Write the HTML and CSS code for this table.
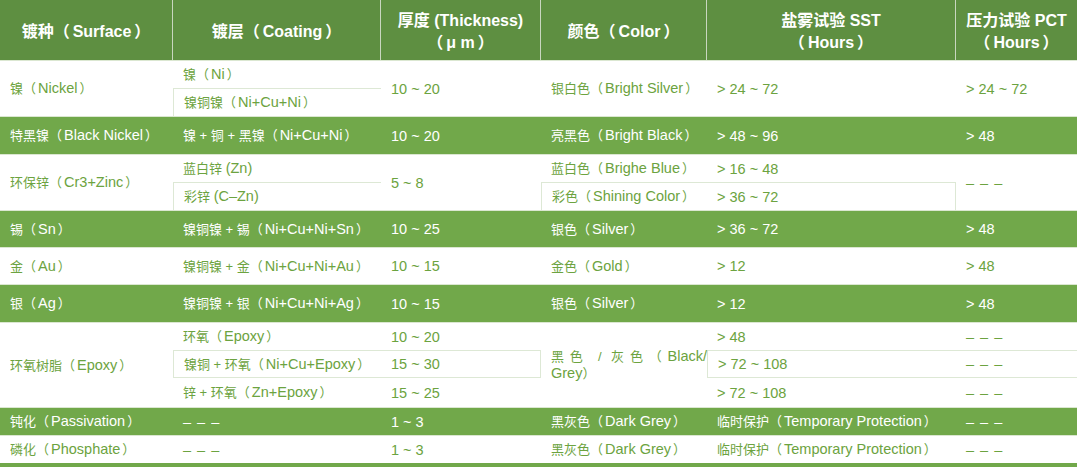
FILE: index.html
```html
<!DOCTYPE html>
<html lang="zh">
<head>
<meta charset="utf-8">
<title>镀层规格</title>
<link rel="stylesheet" href="styles.css">
</head>
<body>
<table class="spec">
  <colgroup>
    <col class="c1"><col class="c2"><col class="c3"><col class="c4"><col class="c5"><col class="c6">
  </colgroup>
  <thead>
    <tr class="head">
      <th>镀种（<span class="in">Surface</span>）</th>
      <th>镀层（<span class="in">Coating</span>）</th>
      <th>厚度 (Thickness)<br>（<span class="in">μ m</span>）</th>
      <th>颜色（<span class="in">Color</span>）</th>
      <th>盐雾试验 SST<br>（<span class="in">Hours</span>）</th>
      <th>压力试验 PCT<br>（<span class="in">Hours</span>）</th>
    </tr>
  </thead>
  <tbody>
    <tr class="sep h28">
      <td rowspan="2">镍（<span class="in">Nickel</span>）</td>
      <td>镍（<span class="in">Ni</span>）</td>
      <td rowspan="2" class="num">10 ~ 20</td>
      <td rowspan="2">银白色（<span class="in">Bright Silver</span>）</td>
      <td rowspan="2" class="num">&gt; 24 ~ 72</td>
      <td rowspan="2" class="num">&gt; 24 ~ 72</td>
    </tr>
    <tr class="h28">
      <td class="bt bl">镍铜镍（<span class="in">Ni+Cu+Ni</span>）</td>
    </tr>
    <tr class="sep green h38">
      <td>特黑镍（<span class="in">Black Nickel</span>）</td>
      <td>镍 + 铜 + 黑镍（<span class="in">Ni+Cu+Ni</span>）</td>
      <td class="num">10 ~ 20</td>
      <td>亮黑色（<span class="in">Bright Black</span>）</td>
      <td class="num">&gt; 48 ~ 96</td>
      <td class="num">&gt; 48</td>
    </tr>
    <tr class="sep h28">
      <td rowspan="2">环保锌（<span class="in">Cr3+Zinc</span>）</td>
      <td>蓝白锌 <span class="en">(Zn)</span></td>
      <td rowspan="2" class="num">5 ~ 8</td>
      <td>蓝白色（<span class="in">Brighe Blue</span>）</td>
      <td class="num">&gt; 16 ~ 48</td>
      <td rowspan="2" class="num dash">– – –</td>
    </tr>
    <tr class="h28">
      <td class="bt bl">彩锌 <span class="en">(C–Zn)</span></td>
      <td class="bt bl">彩色（<span class="in">Shining Color</span>）</td>
      <td class="bt br num">&gt; 36 ~ 72</td>
    </tr>
    <tr class="sep green h37">
      <td>锡（<span class="in">Sn</span>）</td>
      <td>镍铜镍 + 锡（<span class="in">Ni+Cu+Ni+Sn</span>）</td>
      <td class="num">10 ~ 25</td>
      <td>银色（<span class="in">Silver</span>）</td>
      <td class="num">&gt; 36 ~ 72</td>
      <td class="num">&gt; 48</td>
    </tr>
    <tr class="sep h37">
      <td>金（<span class="in">Au</span>）</td>
      <td>镍铜镍 + 金（<span class="in">Ni+Cu+Ni+Au</span>）</td>
      <td class="num">10 ~ 15</td>
      <td>金色（<span class="in">Gold</span>）</td>
      <td class="num">&gt; 12</td>
      <td class="num">&gt; 48</td>
    </tr>
    <tr class="sep green h38">
      <td>银（<span class="in">Ag</span>）</td>
      <td>镍铜镍 + 银（<span class="in">Ni+Cu+Ni+Ag</span>）</td>
      <td class="num">10 ~ 15</td>
      <td>银色（<span class="in">Silver</span>）</td>
      <td class="num">&gt; 12</td>
      <td class="num">&gt; 48</td>
    </tr>
    <tr class="sep h28">
      <td rowspan="3">环氧树脂（<span class="in">Epoxy</span>）</td>
      <td>环氧（<span class="in">Epoxy</span>）</td>
      <td class="num">10 ~ 20</td>
      <td rowspan="3" class="just">黑色 / 灰色（<span class="en">Black/<wbr>Grey</span>）</td>
      <td class="num">&gt; 48</td>
      <td class="num dash">– – –</td>
    </tr>
    <tr class="h28">
      <td class="bt bb bl">镍铜 + 环氧（<span class="in">Ni+Cu+Epoxy</span>）</td>
      <td class="bt bb br num">15 ~ 30</td>
      <td class="bt bb bl num">&gt; 72 ~ 108</td>
      <td class="bt bb num dash">– – –</td>
    </tr>
    <tr class="h29">
      <td>锌 + 环氧（<span class="in">Zn+Epoxy</span>）</td>
      <td class="num">15 ~ 25</td>
      <td class="num">&gt; 72 ~ 108</td>
      <td class="num dash">– – –</td>
    </tr>
    <tr class="sep green h28">
      <td>钝化（<span class="in">Passivation</span>）</td>
      <td class="num dash">– – –</td>
      <td class="num">1 ~ 3</td>
      <td>黑灰色（<span class="in">Dark Grey</span>）</td>
      <td>临时保护（<span class="in">Temporary Protection</span>）</td>
      <td class="num dash">– – –</td>
    </tr>
    <tr class="sep h28">
      <td>磷化（<span class="in">Phosphate</span>）</td>
      <td class="num dash">– – –</td>
      <td class="num">1 ~ 3</td>
      <td>黑灰色（<span class="in">Dark Grey</span>）</td>
      <td>临时保护（<span class="in">Temporary Protection</span>）</td>
      <td class="num dash">– – –</td>
    </tr>
  </tbody>
</table>
</body>
</html>
```
FILE: styles.css
```css
html, body {
  margin: 0;
  padding: 0;
  background: #ffffff;
}

body {
  width: 1077px;
  height: 467px;
  overflow: hidden;
  font-family: "Liberation Sans", Arial, "Noto Sans CJK SC", sans-serif;
}

.spec {
  width: 1077px;
  table-layout: fixed;
  border-collapse: separate;
  border-spacing: 0;
  border-bottom: 4px solid #71a84a;
}

.c1 { width: 173px; }
.c2 { width: 208px; }
.c3 { width: 160px; }
.c4 { width: 166px; }
.c5 { width: 249px; }
.c6 { width: 121px; }

.head th {
  height: 56px;
  padding: 4px 4px 0;
  background: #5e8f41;
  color: #ffffff;
  font-size: 16px;
  line-height: 22px;
  font-weight: bold;
  text-align: center;
  vertical-align: middle;
  border-right: 1px solid #c9d6bf;
  white-space: nowrap;
}

.head th:last-child {
  border-right: 0;
}

.head .in {
  padding: 0 3px;
}

.spec td {
  padding: 0 4px 0 10px;
  font-size: 13px;
  line-height: 16px;
  color: #6ca340;
  vertical-align: middle;
  text-align: left;
  white-space: nowrap;
}

.spec td .en,
.spec td .in,
.spec td.num {
  font-size: 14.5px;
}

.spec td .in {
  padding: 0 2px;
}

.spec .sep > td {
  border-top: 1px solid #dbe7d1;
}

.spec .green > td {
  background: #71a84a;
  color: #ffffff;
}

.h28 { height: 28px; }
.h29 { height: 29px; }
.h37 { height: 37px; }
.h38 { height: 38px; }

.spec td.bt { border-top: 1px solid #dde8d5; }
.spec td.bb { border-bottom: 1px solid #dde8d5; }
.spec td.bl { border-left: 1px solid #dde8d5; }
.spec td.br { border-right: 1px solid #dde8d5; }

.spec td.dash {
  letter-spacing: 1px;
}

.spec td.just {
  white-space: normal;
  text-align: justify;
  padding-right: 0;
}
```
